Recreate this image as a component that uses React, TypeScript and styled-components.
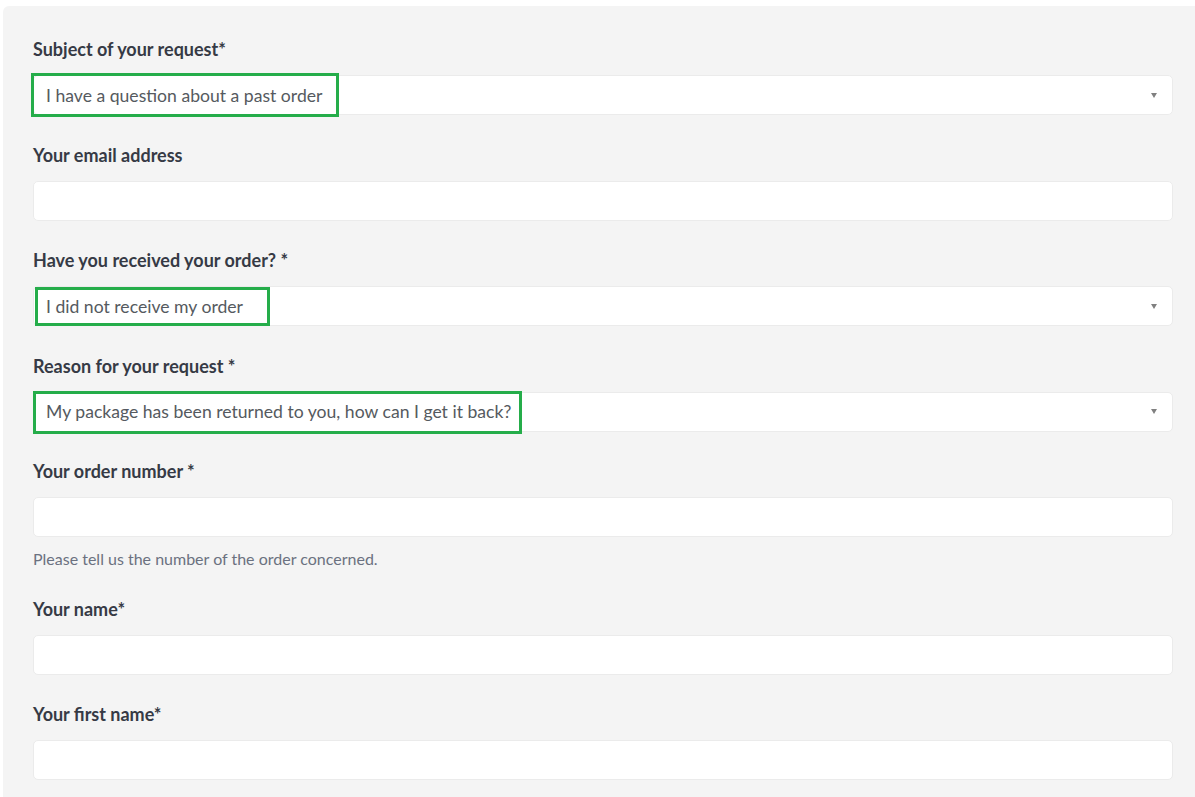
import React from 'react';
import styled, { createGlobalStyle } from 'styled-components';

const GlobalStyle = createGlobalStyle`
    html, body {
        margin: 0;
        padding: 0;
        background: #ffffff;
        overflow: hidden;
    }
    body {
        font-family: Lato, 'Open Sans', Arial, sans-serif;
    }
`;

const Panel = styled.form`
    margin: 6px 0 0 3px;
    padding: 32px 22px 0 30px;
    background-color: #f4f4f4;
    border-radius: 6px 0 0 0;
    height: calc(100vh - 6px);
    overflow: hidden;
    box-sizing: border-box;
`;

const Field = styled.div`
    display: flex;
    flex-direction: column;
    margin-bottom: 28.5px;
`;

const Label = styled.label`
    font-size: 18px;
    line-height: 22px;
    font-weight: 700;
    color: #363a45;
    margin-bottom: 15px;
`;

const Control = styled.div`
    position: relative;
    flex: none;
    height: 40px;
    background: #ffffff;
    border: 1px solid #ebebeb;
    border-radius: 5px;
    box-sizing: border-box;
    display: flex;
    align-items: center;
    padding: 0 13px 0 12px;
    font-size: 17.6px;
    color: #555a60;
`;

const Arrow = styled.span`
    margin-left: auto;
    margin-right: 2px;
    width: 0;
    height: 0;
    border-left: 3.5px solid transparent;
    border-right: 3.5px solid transparent;
    border-top: 5px solid #808080;
`;

const Highlight = styled.span<{ $left: number; $top: number; $width: number; $height: number }>`
    position: absolute;
    left: ${({ $left }) => $left}px;
    top: ${({ $top }) => $top}px;
    width: ${({ $width }) => $width}px;
    height: ${({ $height }) => $height}px;
    border: 3px solid #25ad4a;
    box-sizing: border-box;
    pointer-events: none;
`;

const Help = styled.p`
    margin: 12px 0 0;
    font-size: 16px;
    line-height: 20px;
    color: #6b7180;
`;

type Box = { left: number; top: number; width: number; height: number };

type FieldDef = {
    label: string;
    value?: string;
    select?: boolean;
    help?: string;
    box?: Box;
};

const fields: FieldDef[] = [
    {
        label: 'Subject of your request*',
        value: 'I have a question about a past order',
        select: true,
        box: { left: -3, top: -3, width: 308, height: 44 },
    },
    { label: 'Your email address' },
    {
        label: 'Have you received your order? *',
        value: 'I did not receive my order',
        select: true,
        box: { left: 1, top: 0, width: 235, height: 39 },
    },
    {
        label: 'Reason for your request *',
        value: 'My package has been returned to you, how can I get it back?',
        select: true,
        box: { left: -1, top: -2, width: 489, height: 43 },
    },
    { label: 'Your order number *', help: 'Please tell us the number of the order concerned.' },
    { label: 'Your name*' },
    { label: 'Your first name*' },
];

export default function App() {
    return (
        <>
            <GlobalStyle />
            <Panel>
                {fields.map((f) => (
                    <Field key={f.label}>
                        <Label>{f.label}</Label>
                        <Control>
                            {f.value}
                            {f.select && <Arrow />}
                            {f.box && (
                                <Highlight
                                    $left={f.box.left}
                                    $top={f.box.top}
                                    $width={f.box.width}
                                    $height={f.box.height}
                                />
                            )}
                        </Control>
                        {f.help && <Help>{f.help}</Help>}
                    </Field>
                ))}
            </Panel>
        </>
    );
}
